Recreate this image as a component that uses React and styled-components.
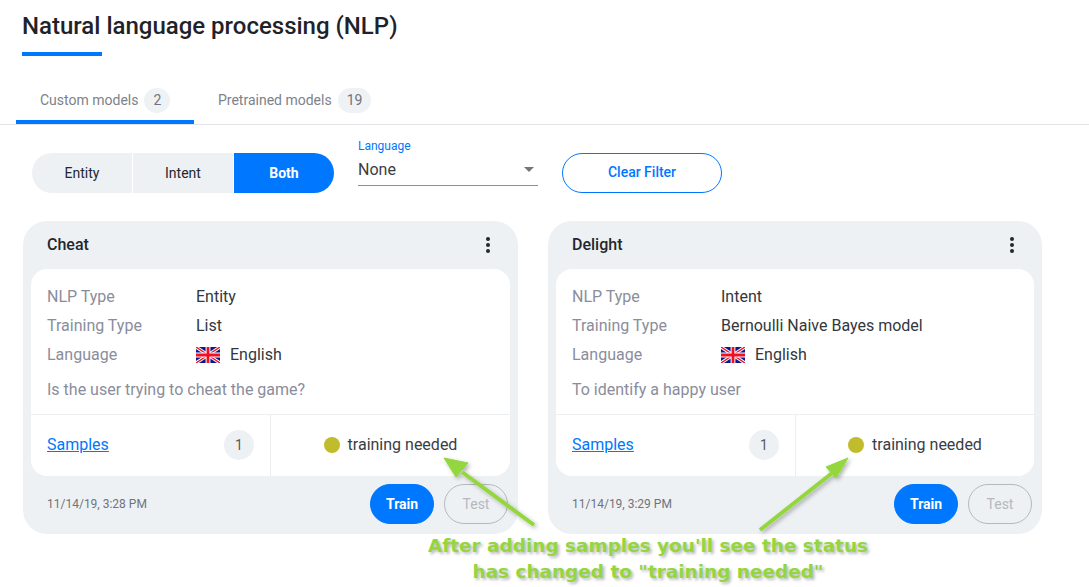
import React from "react";
import styled, { createGlobalStyle } from "styled-components";

const GlobalStyle = createGlobalStyle`
	html, body { margin: 0; padding: 0; background: #fff; }
	body { font-family: Roboto, "Liberation Sans", sans-serif; color: #23272e; }
	* { box-sizing: border-box; }
`;

const Page = styled.div`
	position: relative;
	width: 1089px;
	height: 587px;
	overflow: hidden;
`;

const Header = styled.header`
	padding: 11px 0 0 22px;
`;

const Title = styled.h1`
	margin: 0;
	font-size: 24px;
	line-height: 30px;
	font-weight: 500;
	color: #1f2329;
`;

const TitleBar = styled.div`
	width: 80px;
	height: 4px;
	margin-top: 11px;
	background: #0077ff;
`;

const Tabs = styled.nav`
	display: flex;
	height: 69px;
	padding: 20px 0 0 16px;
	border-bottom: 1px solid #e2e4e8;
`;

const Tab = styled.div`
	display: flex;
	flex: none;
	align-items: center;
	gap: 6px;
	width: ${(p) => (p.$active ? "178px" : "auto")};
	height: 48px;
	padding: 4px 24px 0;
	font-size: 14px;
	white-space: nowrap;
	color: #7d828a;
	border-bottom: 4px solid ${(p) => (p.$active ? "#0077ff" : "transparent")};
`;

const TabCount = styled.span`
	display: flex;
	flex: none;
	align-items: center;
	justify-content: center;
	height: 25px;
	padding: 0 9px;
	border-radius: 13px;
	background: #eff2f5;
	color: #6f747c;
`;

const Filters = styled.div`
	display: flex;
	align-items: center;
	gap: 24px;
	height: 40px;
	margin: 28px 0 0 32px;
`;

const Segments = styled.div`
	display: flex;
	gap: 1px;
	width: 302px;
	height: 40px;
	border-radius: 20px;
	overflow: hidden;
`;

const Segment = styled.div`
	flex: 1;
	display: flex;
	align-items: center;
	justify-content: center;
	padding-bottom: 1px;
	font-size: 14px;
	font-weight: ${(p) => (p.$active ? 700 : 400)};
	color: ${(p) => (p.$active ? "#fff" : "#23272e")};
	background: ${(p) => (p.$active ? "#0077ff" : "#eef1f4")};
`;

const Select = styled.div`
	align-self: flex-start;
	width: 180px;
	height: 47px;
	margin-top: -14px;
	border-bottom: 1px solid #8c8f94;
`;

const SelectLabel = styled.div`
	font-size: 12px;
	line-height: 14px;
	color: #0077ff;
`;

const SelectValue = styled.div`
	display: flex;
	align-items: center;
	justify-content: space-between;
	height: 24px;
	margin-top: 4px;
	font-size: 16px;
	color: #3a3d42;
`;

const Caret = styled.span`
	width: 0;
	height: 0;
	margin-right: 4px;
	border-left: 5px solid transparent;
	border-right: 5px solid transparent;
	border-top: 5px solid #767676;
`;

const ClearButton = styled.button`
	width: 160px;
	height: 40px;
	padding: 0 0 2px;
	border: 1px solid #0077ff;
	border-radius: 20px;
	background: #fff;
	color: #0077ff;
	font: 500 14px Roboto, sans-serif;
`;

const Cards = styled.div`
	display: flex;
	gap: 30px;
	margin: 28px 0 0 23px;
`;

const Card = styled.article`
	display: flex;
	flex-direction: column;
	width: 495px;
	height: 313px;
	padding: 0 8px;
	border-radius: 24px;
	background: #eef1f4;

	&:last-child {
		width: 494px;
	}
`;

const CardHead = styled.div`
	display: flex;
	align-items: center;
	justify-content: space-between;
	height: 48px;
	padding: 0 16px 2px;
	font-size: 16px;
	font-weight: 500;
	color: #23272e;
`;

const Kebab = styled.svg`
	width: 6px;
	height: 18px;
	margin: 2px 3px 0 0;
	fill: #23272e;
`;

const CardBody = styled.div`
	height: 207px;
	border-radius: 16px;
	background: #fff;
	overflow: hidden;
`;

const Details = styled.div`
	height: 145px;
	padding: 13px 16px 0;
	font-size: 16px;
`;

const Row = styled.div`
	display: flex;
	align-items: center;
	height: 29px;
`;

const Key = styled.div`
	width: 149px;
	color: #8a8d9c;
`;

const Value = styled.div`
	display: flex;
	align-items: center;
	gap: 10px;
	color: #33373d;
`;

const Flag = styled.svg`
	width: 24px;
	height: 16px;
`;

const Description = styled.p`
	margin: 11px 0 0;
	line-height: 20px;
	color: #8a8d9c;
`;

const BodyFooter = styled.div`
	display: flex;
	height: 62px;
	padding-bottom: 2px;
	border-top: 1px solid #eceff2;
`;

const SamplesCell = styled.div`
	display: flex;
	align-items: center;
	justify-content: space-between;
	width: 240px;
	margin-bottom: -2px;
	padding: 0 16px 2px;
	border-right: 1px solid #eceff2;
`;

const SamplesLink = styled.a`
	font-size: 16px;
	color: #0077ff;
	text-decoration: underline;
`;

const SamplesCount = styled.span`
	display: flex;
	align-items: center;
	justify-content: center;
	width: 30px;
	height: 30px;
	border-radius: 50%;
	background: #eef1f4;
	font-size: 14px;
	color: #55595f;
`;

const StatusCell = styled.div`
	flex: 1;
	display: flex;
	align-items: center;
	justify-content: center;
	gap: 8px;
	font-size: 16px;
	color: #3a3d42;
`;

const StatusDot = styled.span`
	width: 16px;
	height: 16px;
	border-radius: 50%;
	background: #c1bc2b;
`;

const CardFoot = styled.div`
	flex: 1;
	display: flex;
	align-items: center;
	gap: 10px;
	padding: 0 2px 2px 16px;
`;

const DateText = styled.div`
	flex: 1;
	font-size: 12px;
	color: #6f747c;
`;

const Action = styled.button`
	width: 64px;
	height: 40px;
	border-radius: 20px;
	border: 1px solid ${(p) => (p.$primary ? "#0077ff" : "#b5b8bd")};
	background: ${(p) => (p.$primary ? "#0077ff" : "transparent")};
	color: ${(p) => (p.$primary ? "#fff" : "#b5b8bd")};
	font: ${(p) => (p.$primary ? 700 : 400)} 14px Roboto, sans-serif;
`;

const Arrows = styled.svg`
	position: absolute;
	inset: 0;
	width: 1089px;
	height: 587px;
	pointer-events: none;
`;

const Note = styled.div`
	position: absolute;
	left: 378px;
	top: 533px;
	width: 540px;
	text-align: center;
	font: 700 18.45px/26px "DejaVu Sans", sans-serif;
	color: #93d63e;
	text-shadow: 2px 2px 3px rgba(0, 0, 0, 0.28);
`;

const UkFlag = () => (
	<Flag viewBox="0 0 60 40" preserveAspectRatio="none">
		<rect width="60" height="40" fill="#0a1a8c" />
		<path d="M0 0 L60 40 M60 0 L0 40" stroke="#fff" strokeWidth="8" />
		<path d="M0 0 L60 40 M60 0 L0 40" stroke="#f00f23" strokeWidth="3.5" />
		<path d="M30 0 V40 M0 20 H60" stroke="#fff" strokeWidth="12" />
		<path d="M30 0 V40 M0 20 H60" stroke="#f00f23" strokeWidth="7" />
	</Flag>
);

const models = [
	{ name: "Cheat", type: "Entity", training: "List", text: "Is the user trying to cheat the game?", date: "11/14/19, 3:28 PM" },
	{ name: "Delight", type: "Intent", training: "Bernoulli Naive Bayes model", text: "To identify a happy user", date: "11/14/19, 3:29 PM" },
];

function ModelCard({ model }) {
	return (
		<Card>
			<CardHead>
				{model.name}
				<Kebab viewBox="0 0 6 18">
					<circle cx="3" cy="3" r="2" />
					<circle cx="3" cy="9" r="2" />
					<circle cx="3" cy="15" r="2" />
				</Kebab>
			</CardHead>
			<CardBody>
				<Details>
					<Row>
						<Key>NLP Type</Key>
						<Value>{model.type}</Value>
					</Row>
					<Row>
						<Key>Training Type</Key>
						<Value>{model.training}</Value>
					</Row>
					<Row>
						<Key>Language</Key>
						<Value>
							<UkFlag />
							English
						</Value>
					</Row>
					<Description>{model.text}</Description>
				</Details>
				<BodyFooter>
					<SamplesCell>
						<SamplesLink>Samples</SamplesLink>
						<SamplesCount>1</SamplesCount>
					</SamplesCell>
					<StatusCell>
						<StatusDot />
						training needed
					</StatusCell>
				</BodyFooter>
			</CardBody>
			<CardFoot>
				<DateText>{model.date}</DateText>
				<Action $primary>Train</Action>
				<Action>Test</Action>
			</CardFoot>
		</Card>
	);
}

export default function App() {
	return (
		<Page>
			<GlobalStyle />
			<Header>
				<Title>Natural language processing (NLP)</Title>
				<TitleBar />
			</Header>
			<Tabs>
				<Tab $active>
					Custom models <TabCount>2</TabCount>
				</Tab>
				<Tab>
					Pretrained models <TabCount>19</TabCount>
				</Tab>
			</Tabs>
			<Filters>
				<Segments>
					<Segment>Entity</Segment>
					<Segment>Intent</Segment>
					<Segment $active>Both</Segment>
				</Segments>
				<Select>
					<SelectLabel>Language</SelectLabel>
					<SelectValue>
						None
						<Caret />
					</SelectValue>
				</Select>
				<ClearButton>Clear Filter</ClearButton>
			</Filters>
			<Cards>
				{models.map((m) => (
					<ModelCard key={m.name} model={m} />
				))}
			</Cards>
			<Arrows viewBox="0 0 1089 587">
				<defs>
					<filter id="arrowShadow" x="-20%" y="-20%" width="140%" height="140%">
						<feDropShadow dx="2" dy="2" stdDeviation="2" floodColor="#000" floodOpacity="0.3" />
					</filter>
				</defs>
				<g fill="#93d63e" stroke="#93d63e" filter="url(#arrowShadow)">
					<path d="M534 525 L462 472" strokeWidth="4" />
					<path d="M444 458 L468 463 L456 477 Z" strokeWidth="1" />
					<path d="M760 530 L836 470" strokeWidth="4" />
					<path d="M848 458 L826 467 L836 478 Z" strokeWidth="1" />
				</g>
			</Arrows>
			<Note>
				After adding samples you'll see the status
				<br />
				has changed to "training needed"
			</Note>
		</Page>
	);
}
